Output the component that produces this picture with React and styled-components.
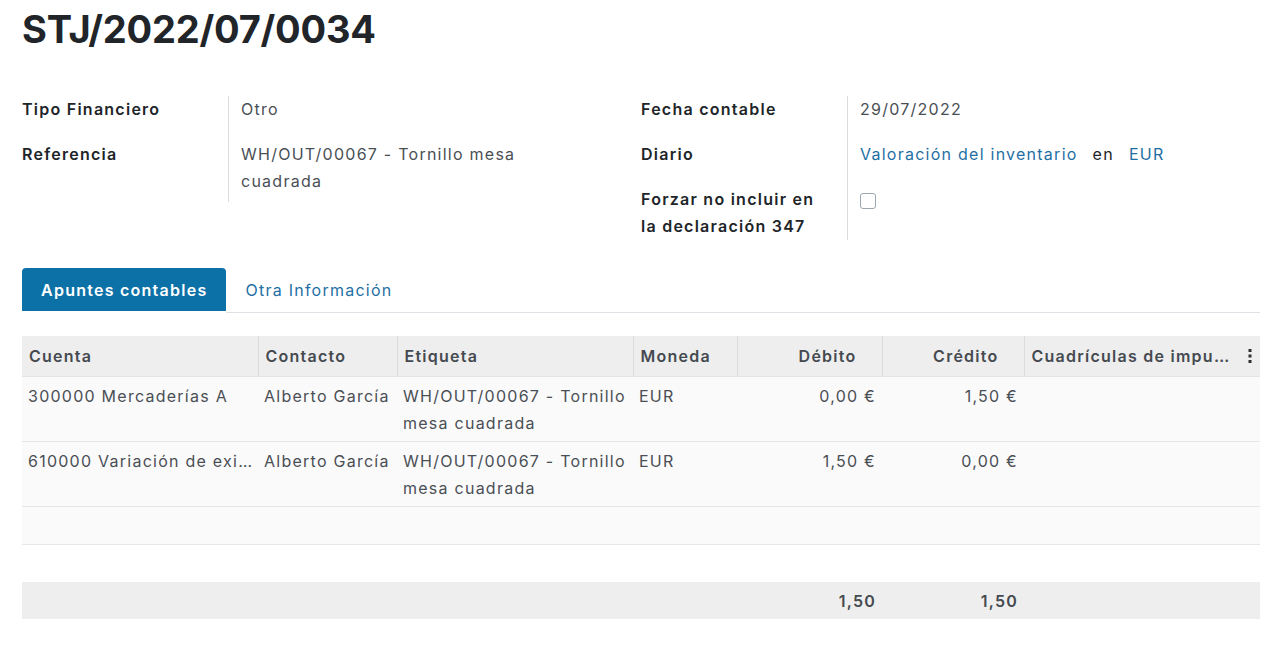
import React from "react";
import styled, { createGlobalStyle } from "styled-components";

const GlobalStyle = createGlobalStyle`
  body {
    margin: 0;
    background: #fff;
    font-family: "Inter", "Noto Sans", sans-serif;
    color: #212529;
  }
`;

const columns = [
  { key: "cuenta", title: "Cuenta", width: 236 },
  { key: "contacto", title: "Contacto", width: 139 },
  { key: "etiqueta", title: "Etiqueta", width: 236 },
  { key: "moneda", title: "Moneda", width: 104 },
  { key: "debito", title: "Débito", width: 145, num: true },
  { key: "credito", title: "Crédito", width: 142, num: true },
  { key: "tags", title: "Cuadrículas de impuestos", width: 236 },
];

const lines = [
  {
    cuenta: "300000 Mercaderías A",
    contacto: "Alberto García",
    etiqueta: "WH/OUT/00067 - Tornillo mesa cuadrada",
    moneda: "EUR",
    debito: "0,00 €",
    credito: "1,50 €",
    tags: "",
  },
  {
    cuenta: "610000 Variación de existencias",
    contacto: "Alberto García",
    etiqueta: "WH/OUT/00067 - Tornillo mesa cuadrada",
    moneda: "EUR",
    debito: "1,50 €",
    credito: "0,00 €",
    tags: "",
  },
];

const App = () => {
  return (
    <Page>
      <GlobalStyle />
      <Title>STJ/2022/07/0034</Title>

      <Groups>
        <Group>
          <Label>Tipo Financiero</Label>
          <Value>Otro</Value>
          <Label $last>Referencia</Label>
          <Value $last $extra={7}>
            WH/OUT/00067 - Tornillo mesa
            <br />
            cuadrada
          </Value>
        </Group>
        <Group>
          <Label>Fecha contable</Label>
          <Value>29/07/2022</Value>
          <Label>Diario</Label>
          <Value>
            <Link>Valoración del inventario</Link>
            <Muted>en</Muted>
            <Link>EUR</Link>
          </Value>
          <Label $last>
            Forzar no incluir en
            <br />
            la declaración 347
          </Label>
          <Value $last>
            <Check />
          </Value>
        </Group>
      </Groups>

      <Tabs>
        <Tab $active>Apuntes contables</Tab>
        <Tab>Otra Información</Tab>
        <TabFill />
      </Tabs>

      <Table>
        <colgroup>
          {columns.map((c) => (
            <col key={c.key} style={{ width: c.width }} />
          ))}
        </colgroup>
        <thead>
          <tr>
            {columns.map((c, i) => (
              <Th key={c.key} $num={c.num} $last={i === columns.length - 1}>
                <span>{c.title}</span>
                {i === columns.length - 1 && (
                  <Kebab viewBox="0 0 4 14">
                    <rect x="0.5" y="0" width="3" height="3" />
                    <rect x="0.5" y="5.5" width="3" height="3" />
                    <rect x="0.5" y="11" width="3" height="3" />
                  </Kebab>
                )}
              </Th>
            ))}
          </tr>
        </thead>
        <tbody>
          {lines.map((line, r) => (
            <Tr key={r}>
              {columns.map((c) => (
                <Td key={c.key} $num={c.num} $clip={c.key === "cuenta"}>
                  {line[c.key]}
                </Td>
              ))}
            </Tr>
          ))}
          <EmptyRow>
            <td colSpan={columns.length} />
          </EmptyRow>
        </tbody>
        <tbody>
          <SpacerRow>
            <td colSpan={columns.length} />
          </SpacerRow>
        </tbody>
        <tfoot>
          <FootRow>
            {columns.map((c) => (
              <Td key={c.key} $num={c.num}>
                {c.key === "debito" || c.key === "credito" ? "1,50" : ""}
              </Td>
            ))}
          </FootRow>
        </tfoot>
      </Table>
    </Page>
  );
};

const Page = styled.div`
  width: 1238px;
  padding: 0 16px 0 22px;
  letter-spacing: 1.25px;
`;

const Title = styled.h1`
  margin: 0;
  padding-top: 6px;
  font-size: 38px;
  line-height: 46px;
  font-weight: 700;
  letter-spacing: -0.2px;
  color: #212529;
`;

const Groups = styled.div`
  display: grid;
  grid-template-columns: 619px 619px;
  margin-top: 44px;
  align-items: start;
`;

const Group = styled.div`
  display: grid;
  grid-template-columns: 206px 1fr;
  font-size: 16px;
  line-height: 27px;
`;

const Label = styled.div`
  font-weight: 600;
  color: #212529;
  padding-bottom: ${(p) => (p.$last ? 0 : 18)}px;
`;

const Value = styled.div`
  border-left: 1px solid #dcdcdc;
  padding-left: 12px;
  color: #4a4f55;
  padding-bottom: ${(p) => (p.$last ? p.$extra || 0 : 18)}px;
`;

const Link = styled.span`
  color: #1f6fa5;
`;

const Muted = styled.span`
  color: #212529;
  margin: 0 15px;
`;

const Check = styled.span`
  display: inline-block;
  width: 14px;
  height: 14px;
  margin-top: 7px;
  border: 1px solid #9aa6b2;
  border-radius: 3px;
  background: #fff;
`;

const Tabs = styled.div`
  display: flex;
  margin-top: 28px;
  height: 45px;
`;

const Tab = styled.div`
  display: flex;
  align-items: center;
  padding: 0 19px;
  font-size: 16px;
  font-weight: ${(p) => (p.$active ? 600 : 400)};
  color: ${(p) => (p.$active ? "#fff" : "#1f6fa5")};
  background: ${(p) => (p.$active ? "#0c71a6" : "transparent")};
  border-radius: 4px 4px 0 0;
  border-bottom: ${(p) => (p.$active ? "none" : "1px solid #dee2e6")};
  height: ${(p) => (p.$active ? 43 : 44)}px;
`;

const TabFill = styled.div`
  flex: 1;
  height: 44px;
  border-bottom: 1px solid #dee2e6;
`;

const Table = styled.table`
  margin-top: 23px;
  width: 1238px;
  table-layout: fixed;
  border-collapse: collapse;
  font-size: 16px;
  line-height: 27px;
`;

const Th = styled.th`
  position: relative;
  height: 40px;
  padding: 0 ${(p) => (p.$num ? 25 : 7)}px 0 7px;
  background: #eeeeee;
  border-left: 1px solid #dcdcdc;
  border-bottom: 1px solid #e4e4e4;
  text-align: ${(p) => (p.$num ? "right" : "left")};
  font-weight: 600;
  color: #454a50;
  white-space: nowrap;
  overflow: hidden;
  &:first-child {
    border-left: none;
  }

  span {
    display: block;
    overflow: hidden;
    text-overflow: ellipsis;
    padding-right: ${(p) => (p.$last ? 18 : 0)}px;
  }
`;

const Kebab = styled.svg`
  position: absolute;
  right: 8px;
  top: 13px;
  width: 4px;
  height: 14px;
  fill: #2b2f33;
`;

const Tr = styled.tr`
  background: #fafafa;
  border-bottom: 1px solid #e6e6e6;
`;

const Td = styled.td`
  padding: 6px ${(p) => (p.$num ? 6 : 5)}px 4px 6px;
  vertical-align: top;
  text-align: ${(p) => (p.$num ? "right" : "left")};
  color: #4a4f55;
  ${(p) =>
    p.$clip &&
    `
    white-space: nowrap;
    overflow: hidden;
    text-overflow: ellipsis;
  `}
`;

const EmptyRow = styled.tr`
  background: #fafafa;
  border-bottom: 1px solid #e6e6e6;
  td {
    height: 37px;
    padding: 0;
  }
`;

const SpacerRow = styled.tr`
  td {
    height: 37px;
    padding: 0;
  }
`;

const FootRow = styled.tr`
  background: #eeeeee;
  td {
    height: 27px;
    font-weight: 600;
    color: #454a50;
  }
`;

export default App;
